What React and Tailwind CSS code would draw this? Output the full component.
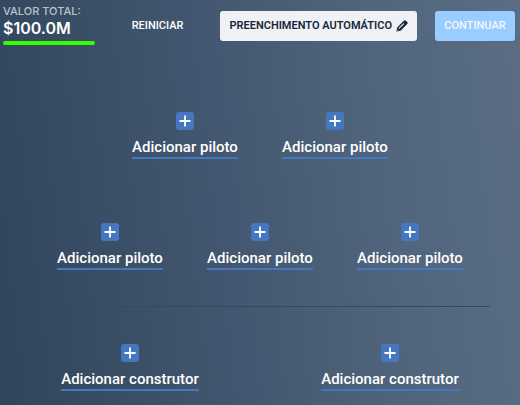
import React from "react";

function PencilIcon() {
  return (
    <svg viewBox="0 0 12 12" className="h-3 w-3" aria-hidden="true">
      <path
        d="M.4 11.6l.8-4.1L7.9.8a1.4 1.4 0 0 1 2 0l1.3 1.3a1.4 1.4 0 0 1 0 2L4.5 10.8z"
        fill="#15263a"
      />
      <path d="M3.2 8.2l4.3-4.3" stroke="#f0f1f4" strokeWidth="1.1" strokeLinecap="round" />
      <path d="M1.8 9.3l1 1-1.3.3z" fill="#f0f1f4" />
    </svg>
  );
}

function PlusIcon() {
  return (
    <span className="flex h-[18px] w-[18px] items-center justify-center rounded-[3px] bg-[#4477bf]">
      <svg viewBox="0 0 12 12" className="h-3 w-3" aria-hidden="true">
        <path d="M6 0.5v11M0.5 6h11" stroke="#fff" strokeWidth="1.8" />
      </svg>
    </span>
  );
}

function AddSlot({ label }) {
  return (
    <button type="button" className="flex flex-col items-center gap-[7px] text-white">
      <PlusIcon />
      <span className="border-b-2 border-[#4477bf] text-[15px] leading-5 font-medium whitespace-nowrap">
        {label}
      </span>
    </button>
  );
}

function SlotRow({ count }) {
  return (
    <div className="flex justify-center">
      {Array.from({ length: count }, (_, i) => (
        <div key={i} className="flex w-[150px] justify-center">
          <AddSlot label="Adicionar piloto" />
        </div>
      ))}
    </div>
  );
}

export default function App() {
  return (
    <main className="min-h-screen bg-[linear-gradient(83deg,#30455b_0%,#435870_44%,#50657b_72%,#5a6d85_100%)] font-['Roboto',sans-serif] text-white">
      <header className="flex items-start pr-[5px] pl-[3px]">
        <div className="w-[92px] pt-[3px] font-['Inter',sans-serif]">
          <p className="text-[11px] leading-4 font-medium whitespace-nowrap text-[#b9c3ce]">VALOR TOTAL:</p>
          <p className="text-base leading-[18px] font-semibold">$100.0M</p>
          <div className="mt-1 h-1 rounded-full bg-[#33ff00]" />
        </div>
        <div className="flex flex-1 items-center justify-end pt-[11px] text-[11px] font-medium">
          <button type="button" className="mr-7 h-[30px] px-[9px]">REINICIAR</button>
          <button
            type="button"
            className="mr-[18px] flex h-[30px] items-center gap-1 rounded-[3px] bg-[#f0f1f4] px-[9px] font-semibold whitespace-nowrap text-[#15263a]"
          >
            PREENCHIMENTO AUTOMÁTICO
            <PencilIcon />
          </button>
          <button type="button" className="h-[30px] w-20 rounded-[3px] bg-[#99ccff] text-[#f3f9ff]">
            CONTINUAR
          </button>
        </div>
      </header>
      <section className="flex flex-col gap-16 pt-[67px]">
        <SlotRow count={2} />
        <SlotRow count={3} />
      </section>
      <hr className="mx-[30px] mt-9 h-px border-0 bg-[linear-gradient(90deg,transparent,#354a60_20%,#34495f)]" />
      <section className="grid grid-cols-2 pt-[37px]">
        <div className="flex justify-center">
          <AddSlot label="Adicionar construtor" />
        </div>
        <div className="flex justify-center">
          <AddSlot label="Adicionar construtor" />
        </div>
      </section>
    </main>
  );
}
